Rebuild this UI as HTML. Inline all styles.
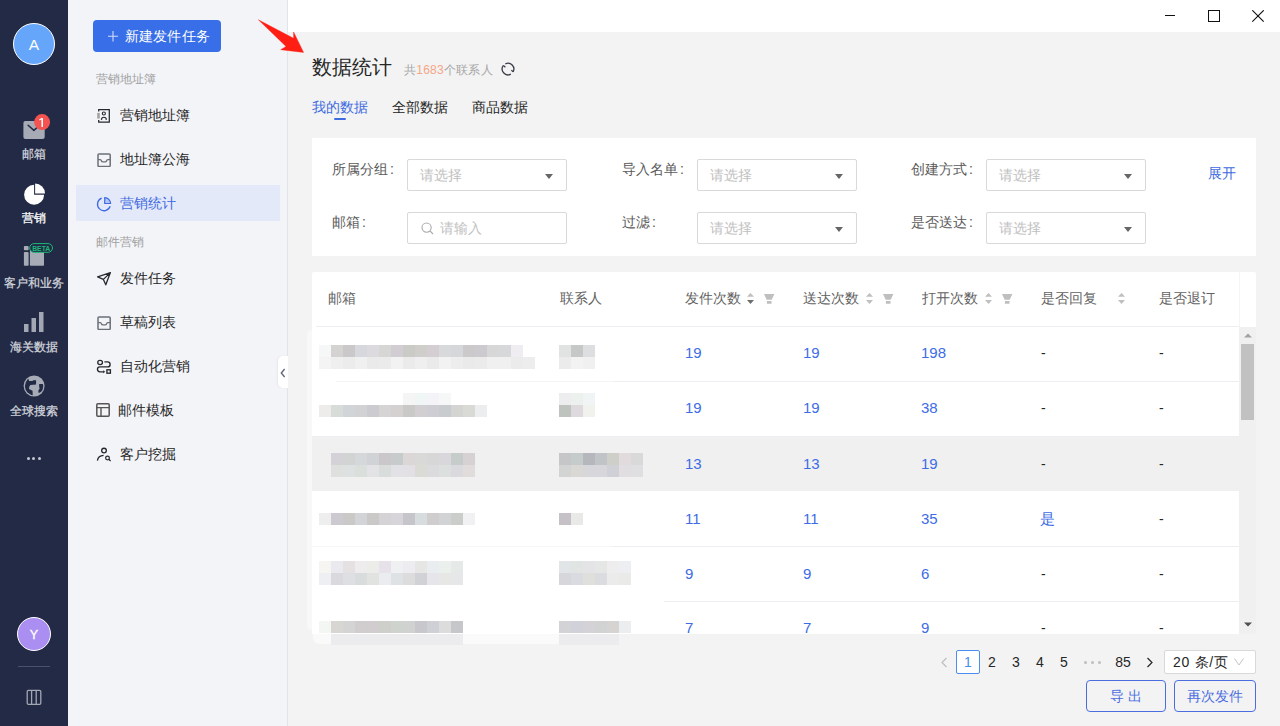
<!DOCTYPE html>
<html><head><meta charset="utf-8">
<style>
*{box-sizing:border-box;margin:0;padding:0}
html,body{width:1280px;height:726px;overflow:hidden;background:#f3f3f3;font-family:"Liberation Sans",sans-serif;color:#262626}
.a{position:absolute}
.t{position:absolute;white-space:nowrap;line-height:20px}
#nav{left:0;top:0;width:68px;height:726px;background:#222a45}
#side{left:68px;top:0;width:220px;height:726px;background:#f3f4f8;border-right:1px solid #e3e4e8}
#titlebar{left:288px;top:0;width:992px;height:32px;background:#fff}
.navtxt{position:absolute;left:0;width:68px;text-align:center;font-size:12px;line-height:16px;color:#d2d5dc;-webkit-text-stroke:0.25px currentColor}
.sec{font-size:12px;color:#a0a0a0}
.mi{font-size:14px;color:#262626}
.card{background:#fff}
.lbl{font-size:14px;color:#5a5a5a}
.co{margin-left:2px}
.sel{position:absolute;width:160px;height:32px;border:1px solid #d9d9d9;background:#fff;border-radius:2px}
.ph{position:absolute;left:12px;top:5px;font-size:14px;line-height:20px;color:#bfbfbf}
.caret{position:absolute;right:13px;top:14px;width:0;height:0;border-left:4px solid transparent;border-right:4px solid transparent;border-top:5px solid #666}
.th{font-size:14px;color:#626262}
.num{font-size:15px;color:#3d6ce6}
.dash{font-size:14px;color:#262626}
.blur{position:absolute}
</style></head><body>
<!-- left nav -->
<div id="nav" class="a">
  <div class="a" style="left:13px;top:23px;width:42px;height:42px;border-radius:50%;background:#66a6fa;border:1.5px solid #fff;"></div>
  <div class="t" style="left:13px;top:34.5px;width:42px;text-align:center;color:#fff;font-size:15.5px;">A</div>
  <!-- mail -->
  <svg class="a" style="left:22px;top:114px" width="32" height="28" viewBox="0 0 32 28">
    <rect x="1.4" y="6.9" width="21.3" height="18.2" rx="2" fill="#a7abb6"/>
    <path d="M6.1 11.3 L11.9 16.4 L17.5 11.3" stroke="#222a45" stroke-width="1.5" fill="none" stroke-linecap="round" stroke-linejoin="round"/>
    <circle cx="20.1" cy="8.1" r="8" fill="#f35452"/>
    <path d="M20.2 4.3 V13" stroke="#fff" stroke-width="1.5"/>
    <path d="M17.4 5.9 L20.3 4.2" stroke="#fff" stroke-width="1.2"/>
  </svg>
  <div class="navtxt" style="top:146px">邮箱</div>
  <!-- pie -->
  <svg class="a" style="left:20px;top:180px" width="28" height="28" viewBox="20 180 28 28">
    <path d="M34.1 184.7 A10 10 0 1 0 44.1 194.7 L34.1 194.7 Z" fill="#fff"/>
    <path d="M35.1 183.5 A9.9 9.9 0 0 1 45 193.4 L35.1 193.4 Z" fill="#fff"/>
  </svg>
  <div class="navtxt" style="top:210px;color:#fff">营销</div>
  <!-- customer -->
  <svg class="a" style="left:18px;top:238px" width="40" height="32" viewBox="18 238 40 32">
    <rect x="23.9" y="246.1" width="4.7" height="4.2" rx="0.8" fill="#a7abb6"/>
    <rect x="23.9" y="252.1" width="4.7" height="13.7" rx="0.8" fill="#a7abb6"/>
    <rect x="29.9" y="248" width="14.1" height="17.8" rx="0.8" fill="#a7abb6"/>
    <rect x="29.7" y="243.6" width="22.8" height="8.7" rx="4.35" fill="#222a45" stroke="#1db97a" stroke-width="1"/>
    <text x="41.2" y="250.8" font-size="7.2" font-weight="bold" fill="#1db97a" text-anchor="middle" font-family="Liberation Sans" textLength="18" lengthAdjust="spacingAndGlyphs">BETA</text>
  </svg>
  <div class="navtxt" style="top:275px">客户和业务</div>
  <!-- bars -->
  <svg class="a" style="left:24px;top:312px" width="20" height="20" viewBox="0 0 20 20">
    <rect x="0" y="12" width="4.5" height="8" fill="#a3a7b3"/>
    <rect x="7.5" y="6" width="4.5" height="14" fill="#a3a7b3"/>
    <rect x="15" y="0" width="4.5" height="20" fill="#a3a7b3"/>
  </svg>
  <div class="navtxt" style="top:339px">海关数据</div>
  <!-- globe -->
  <svg class="a" style="left:18px;top:370px" width="32" height="32" viewBox="18 370 32 32">
    <defs><clipPath id="gc"><circle cx="34.1" cy="386" r="9.2"/></clipPath></defs>
    <circle cx="34.1" cy="386" r="10.5" fill="#a7abb6"/>
    <g clip-path="url(#gc)" fill="#222a45">
      <path d="M28.58 370 L28.58 379.25 L29.02 381 L32.54 381 L33.2 380.36 L36.07 380.36 L36.07 384.54 L30.34 384.98 L29.24 386.75 L29.02 388.95 L32.54 390.71 L32.98 400 L18 400 L18 370 Z"/>
      <path d="M39.15 384.1 L46 384.1 L46 390 L38.7 392.9 L38.27 390.7 L39.6 388.5 L39.15 386.75 Z"/>
    </g>
  </svg>
  <div class="navtxt" style="top:403px">全球搜索</div>
  <!-- dots -->
  <div class="a" style="left:27px;top:457px;width:3px;height:3px;border-radius:50%;background:#c5c8d2"></div>
  <div class="a" style="left:32px;top:457px;width:3px;height:3px;border-radius:50%;background:#c5c8d2"></div>
  <div class="a" style="left:38px;top:457px;width:3px;height:3px;border-radius:50%;background:#c5c8d2"></div>
  <!-- Y avatar -->
  <div class="a" style="left:17px;top:617px;width:34px;height:34px;border-radius:50%;background:#ab8ef2;border:1px solid #fff;"></div>
  <div class="t" style="left:17px;top:624.5px;width:34px;text-align:center;color:#fff;font-size:12.5px;-webkit-text-stroke:0.3px #fff">Y</div>
  <div class="a" style="left:18px;top:666px;width:32px;height:1px;background:#4a5168"></div>
  <svg class="a" style="left:26px;top:689px" width="16" height="17" viewBox="26 689 16 17">
    <rect x="27.2" y="690.3" width="13.6" height="14" rx="1.3" fill="none" stroke="#a3a7b3" stroke-width="1.3"/>
    <line x1="31.6" y1="690.5" x2="31.6" y2="704" stroke="#a3a7b3" stroke-width="1.3"/>
    <line x1="36.2" y1="690.5" x2="36.2" y2="704" stroke="#a3a7b3" stroke-width="1.3"/>
  </svg>
</div>
<div id="side" class="a">
  <div class="a" style="left:25px;top:20px;width:128px;height:32px;border-radius:4px;background:#386ee7"></div>
  <svg class="a" style="left:40px;top:31px" width="10" height="11" viewBox="0 0 10 11"><path d="M5 0 V10.5 M0 5.2 H10" stroke="#d3ddfa" stroke-width="1.1"/></svg>
  <div class="t" style="left:56.5px;top:26px;font-size:14px;color:#fff;letter-spacing:0.3px">新建发件任务</div>
  <div class="t sec" style="left:28px;top:69px">营销地址簿</div>
  <!-- item 1 -->
  <svg class="a" style="left:26px;top:105px" width="20" height="22" viewBox="94 105 20 22">
    <path d="M98.7 111.6 V109.5 H109.3 V122.1 H98.7 V120.1" fill="none" stroke="#262830" stroke-width="1.25"/>
    <rect x="97.2" y="112.9" width="2.6" height="5.7" fill="#a3a3a3"/>
    <circle cx="103.85" cy="113.5" r="1.55" fill="none" stroke="#262830" stroke-width="1.1"/>
    <path d="M101.4 119.9 C101.6 116.4 106.2 116.4 106.4 119.9" fill="none" stroke="#262830" stroke-width="1.15"/>
  </svg>
  <div class="t mi" style="left:52px;top:105px">营销地址簿</div>
  <!-- item 2 -->
  <svg class="a" style="left:29px;top:153px" width="14" height="14" viewBox="0 0 14 14">
    <rect x="1" y="0.95" width="12.2" height="12.5" rx="1" fill="none" stroke="#6b6f78" stroke-width="1.5"/>
    <path d="M1 6.6 H3.2 Q4.1 6.6 4.4 7.7 Q4.7 8.8 5.8 8.8 H8.3 Q9.3 8.8 9.6 7.7 Q9.9 6.6 10.8 6.6 H13" fill="none" stroke="#6b6f78" stroke-width="1.35"/>
  </svg>
  <div class="t mi" style="left:52px;top:149px">地址簿公海</div>
  <!-- active item -->
  <div class="a" style="left:8px;top:185px;width:204px;height:36px;background:#e4e9fa"></div>
  <svg class="a" style="left:26px;top:192px" width="20" height="22" viewBox="94 192 20 22">
    <path d="M101.67 198.13 A6.5 6.5 0 1 0 110.15 206.32" fill="none" stroke="#3e6be0" stroke-width="1.3"/>
    <path d="M104.7 203.5 V197.6 A5.9 5.9 0 0 1 110.6 203.5 Z" fill="#b4c5f5" stroke="#3e6be0" stroke-width="1.2" stroke-linejoin="round"/>
  </svg>
  <div class="t mi" style="left:52px;top:193px;color:#3e6be0">营销统计</div>
  <div class="t sec" style="left:28px;top:232px">邮件营销</div>
  <!-- send -->
  <svg class="a" style="left:26px;top:268px" width="20" height="22" viewBox="94 268 20 22">
    <path d="M110.4 272.6 L97.6 276.9 L103.4 279.4 L105.8 284.8 Z M103.4 279.4 L110.4 272.6" fill="none" stroke="#262830" stroke-width="1.3" stroke-linejoin="round"/>
  </svg>
  <div class="t mi" style="left:52px;top:268px">发件任务</div>
  <!-- drafts -->
  <svg class="a" style="left:29px;top:316px" width="14" height="14" viewBox="0 0 14 14">
    <rect x="1" y="0.95" width="12.2" height="12.5" rx="1" fill="none" stroke="#6b6f78" stroke-width="1.5"/>
    <path d="M1 6.6 H3.2 Q4.1 6.6 4.4 7.7 Q4.7 8.8 5.8 8.8 H8.3 Q9.3 8.8 9.6 7.7 Q9.9 6.6 10.8 6.6 H13" fill="none" stroke="#6b6f78" stroke-width="1.35"/>
  </svg>
  <div class="t mi" style="left:52px;top:312px">草稿列表</div>
  <!-- automation -->
  <svg class="a" style="left:26px;top:356px" width="20" height="22" viewBox="94 356 20 22">
    <ellipse cx="100.1" cy="362.5" rx="2.35" ry="2.1" fill="none" stroke="#262830" stroke-width="1.3"/>
    <path d="M104.4 361.9 H107.6 A2.5 2.5 0 0 1 107.6 366.9 H99.9 A2.45 2.45 0 0 0 99.9 371.8 H103.6" fill="none" stroke="#262830" stroke-width="1.35"/>
    <path d="M103.2 370.3 L105.2 371.8 L103.2 373.3 Z" fill="#262830"/>
    <rect x="106.9" y="369.8" width="3.5" height="3.4" fill="none" stroke="#262830" stroke-width="1.35"/>
  </svg>
  <div class="t mi" style="left:52px;top:356px">自动化营销</div>
  <!-- template -->
  <svg class="a" style="left:28px;top:403px" width="14" height="14" viewBox="0 0 14 14">
    <rect x="0.8" y="0.8" width="12.4" height="12.4" rx="1" fill="none" stroke="#555" stroke-width="1.5"/>
    <path d="M0.8 4.6 H13.2 M5 4.6 V13.2" fill="none" stroke="#555" stroke-width="1.4"/>
  </svg>
  <div class="t mi" style="left:50px;top:400px">邮件模板</div>
  <!-- customer dig -->
  <svg class="a" style="left:26px;top:444px" width="20" height="22" viewBox="94 444 20 22">
    <circle cx="104" cy="450.6" r="2.35" fill="none" stroke="#262830" stroke-width="1.3"/>
    <path d="M97.4 460.6 C97.9 457.5 100.2 455.6 103.6 455.4" fill="none" stroke="#262830" stroke-width="1.3"/>
    <circle cx="107.5" cy="458" r="1.85" fill="none" stroke="#262830" stroke-width="1.25"/>
    <path d="M108.8 459.3 L110.6 460.9" stroke="#262830" stroke-width="1.3"/>
  </svg>
  <div class="t mi" style="left:52px;top:444px">客户挖掘</div>
  <!-- collapse handle -->
  <div class="a" style="left:210px;top:356px;width:10px;height:32px;background:#fff;border-radius:5px 0 0 5px;box-shadow:-1px 0 2px rgba(0,0,0,0.05)"></div>
  <svg class="a" style="left:212px;top:367.5px" width="6" height="10" viewBox="0 0 6 10"><path d="M4.6 1 L1.3 5 L4.6 9" fill="none" stroke="#5f6577" stroke-width="1.35"/></svg>
</div>
<div id="titlebar" class="a">
  <div class="a" style="left:877px;top:15px;width:10px;height:1px;background:#111"></div>
  <div class="a" style="left:920px;top:10px;width:12px;height:12px;border:1px solid #111"></div>
  <svg class="a" style="left:964px;top:10px" width="13" height="13" viewBox="0 0 13 13"><path d="M0.3 0.3 L11.7 11.7 M11.7 0.3 L0.3 11.7" stroke="#111" stroke-width="1.15"/></svg>
</div>
<!-- arrow -->
<svg class="a" style="left:0;top:0" width="320" height="60" viewBox="0 0 320 60">
  <path d="M258.4 19.8 L293.6 38.3 L293.6 32.0 L303.6 52.4 L280.7 49.7 L286.0 46.4 Z" fill="#ff1e14" stroke="#ff1e14" stroke-width="0.4" stroke-linejoin="round"/>
</svg>
<!-- title -->
<div class="t" style="left:312px;top:54px;font-size:20px;line-height:26px;color:#262626">数据统计</div>
<div class="t" style="left:404px;top:60px;font-size:12px;color:#a6a6a6;letter-spacing:0.25px">共<span style="color:#f5a688">1683</span>个联系人</div>
<svg class="a" style="left:500px;top:61px" width="16" height="16" viewBox="0 0 16 16">
  <path d="M5.37 2.83 A5.8 5.8 0 0 1 13.02 10.9 M10.81 13.07 A5.8 5.8 0 0 1 3.43 4.43" fill="none" stroke="#3b3e4a" stroke-width="1.3"/>
  <path d="M13.02 10.9 L11.4 9.1 M3.43 4.43 L5.4 6.3" fill="none" stroke="#3b3e4a" stroke-width="1.3"/>
</svg>
<!-- tabs -->
<div class="t" style="left:312px;top:97px;font-size:14px;color:#3e6be0">我的数据</div>
<div class="a" style="left:334px;top:118px;width:12px;height:2px;background:#3e6be0;border-radius:1px"></div>
<div class="t" style="left:392px;top:97px;font-size:14px;color:#262626">全部数据</div>
<div class="t" style="left:472px;top:97px;font-size:14px;color:#262626">商品数据</div>
<div class="a" style="left:307px;top:330px;width:6px;height:300px;background:#f8f8f8;border-radius:4px 0 0 4px"></div>
<div class="a" style="left:313px;top:633px;width:305px;height:11px;background:#fafafa;border-radius:0 0 10px 6px"></div>
<div class="a" style="left:331px;top:633px;width:132px;height:12px;background:rgb(236,236,238)"></div>
<div class="a" style="left:559px;top:633px;width:60px;height:12px;background:rgb(236,236,238)"></div>
<!-- filter card -->
<div class="a card" style="left:312px;top:138px;width:944px;height:118px"></div>
<div class="t lbl" style="left:332px;top:159px">所属分组<span class="co">:</span></div>
<div class="sel" style="left:407px;top:159px"><span class="ph">请选择</span><i class="caret"></i></div>
<div class="t lbl" style="left:622px;top:159px">导入名单<span class="co">:</span></div>
<div class="sel" style="left:697px;top:159px"><span class="ph">请选择</span><i class="caret"></i></div>
<div class="t lbl" style="left:911px;top:159px">创建方式<span class="co">:</span></div>
<div class="sel" style="left:986px;top:159px"><span class="ph">请选择</span><i class="caret"></i></div>
<div class="t" style="left:1208px;top:163px;font-size:14px;color:#3e6be0">展开</div>
<div class="t lbl" style="left:332px;top:212px">邮箱<span class="co">:</span></div>
<div class="sel" style="left:407px;top:212px">
  <svg class="a" style="left:13px;top:9px" width="13" height="13" viewBox="0 0 13 13"><circle cx="5.6" cy="5.6" r="4.6" fill="none" stroke="#aaa" stroke-width="1.1"/><path d="M9 9 L12 12" stroke="#aaa" stroke-width="1.1"/></svg>
  <span class="ph" style="left:32px">请输入</span>
</div>
<div class="t lbl" style="left:622px;top:212px">过滤<span class="co">:</span></div>
<div class="sel" style="left:697px;top:212px"><span class="ph">请选择</span><i class="caret"></i></div>
<div class="t lbl" style="left:911px;top:212px">是否送达<span class="co">:</span></div>
<div class="sel" style="left:986px;top:212px"><span class="ph">请选择</span><i class="caret"></i></div>

<div class="a" style="left:312px;top:272px;width:944px;height:362px;background:#fff;border-radius:2px 2px 0 0"></div>
<div class="a" style="left:316px;top:326px;width:923px;height:1px;background:#eceef2"></div>
<div class="a" style="left:1239px;top:272px;width:1px;height:55px;background:#f4f5f7"></div>
<div class="t th" style="left:328px;top:288px">邮箱</div>
<div class="t th" style="left:560px;top:288px">联系人</div>
<div class="t th" style="left:685px;top:288px">发件次数</div>
<div class="t th" style="left:803px;top:288px">送达次数</div>
<div class="t th" style="left:922px;top:288px">打开次数</div>
<div class="t th" style="left:1041px;top:288px">是否回复</div>
<div class="t th" style="left:1159px;top:288px">是否退订</div>
<div class="a" style="left:312px;top:436px;width:927px;height:55px;background:#f0f0f0"></div>
<div class="a" style="left:614px;top:381px;width:625px;height:1px;background:#eceef2"></div><div class="a" style="left:336px;top:381px;width:278px;height:1px;background:#f4f4f6"></div>
<div class="a" style="left:312px;top:436px;width:927px;height:1px;background:#eceef2"></div>
<div class="a" style="left:612px;top:546px;width:627px;height:1px;background:#eceef2"></div><div class="a" style="left:312px;top:546px;width:300px;height:1px;background:#f6f6f8"></div>
<div class="a" style="left:664px;top:601px;width:575px;height:1px;background:#eceef2"></div>
<div class="t num" style="left:685px;top:343px">19</div>
<div class="t num" style="left:803px;top:343px">19</div>
<div class="t num" style="left:921px;top:343px">198</div>
<div class="t dash" style="left:1041px;top:343px">-</div>
<div class="t dash" style="left:1159px;top:343px">-</div>
<div class="t num" style="left:685px;top:398px">19</div>
<div class="t num" style="left:803px;top:398px">19</div>
<div class="t num" style="left:921px;top:398px">38</div>
<div class="t dash" style="left:1041px;top:398px">-</div>
<div class="t dash" style="left:1159px;top:398px">-</div>
<div class="t num" style="left:685px;top:453.5px">13</div>
<div class="t num" style="left:803px;top:453.5px">13</div>
<div class="t num" style="left:921px;top:453.5px">19</div>
<div class="t dash" style="left:1041px;top:453.5px">-</div>
<div class="t dash" style="left:1159px;top:453.5px">-</div>
<div class="t num" style="left:685px;top:508.5px">11</div>
<div class="t num" style="left:803px;top:508.5px">11</div>
<div class="t num" style="left:921px;top:508.5px">35</div>
<div class="t num" style="left:1040px;top:508.5px">是</div>
<div class="t dash" style="left:1159px;top:508.5px">-</div>
<div class="t num" style="left:685px;top:563.5px">9</div>
<div class="t num" style="left:803px;top:563.5px">9</div>
<div class="t num" style="left:921px;top:563.5px">6</div>
<div class="t dash" style="left:1041px;top:563.5px">-</div>
<div class="t dash" style="left:1159px;top:563.5px">-</div>
<div class="t num" style="left:685px;top:618px">7</div>
<div class="t num" style="left:803px;top:618px">7</div>
<div class="t num" style="left:921px;top:618px">9</div>
<div class="t dash" style="left:1041px;top:618px">-</div>
<div class="t dash" style="left:1159px;top:618px">-</div>
<div class="a" style="left:312px;top:627px;width:927px;height:7px;overflow:hidden"></div>
<div class="a" style="left:319px;top:345px;width:12px;height:12px;opacity:0.5;background:rgb(238,241,240)"></div>
<div class="a" style="left:331px;top:345px;width:12px;height:12px;background:rgb(212,211,210)"></div><div class="a" style="left:343px;top:345px;width:12px;height:12px;background:rgb(203,200,202)"></div><div class="a" style="left:355px;top:345px;width:12px;height:12px;background:rgb(215,215,222)"></div><div class="a" style="left:367px;top:345px;width:12px;height:12px;background:rgb(220,218,222)"></div><div class="a" style="left:379px;top:345px;width:12px;height:12px;background:rgb(214,215,212)"></div><div class="a" style="left:391px;top:345px;width:12px;height:12px;background:rgb(209,205,211)"></div><div class="a" style="left:403px;top:345px;width:12px;height:12px;background:rgb(202,203,199)"></div><div class="a" style="left:415px;top:345px;width:12px;height:12px;background:rgb(208,206,203)"></div><div class="a" style="left:427px;top:345px;width:12px;height:12px;background:rgb(212,206,211)"></div><div class="a" style="left:439px;top:345px;width:12px;height:12px;background:rgb(216,217,219)"></div><div class="a" style="left:451px;top:345px;width:12px;height:12px;background:rgb(213,215,218)"></div><div class="a" style="left:463px;top:345px;width:12px;height:12px;background:rgb(203,201,202)"></div><div class="a" style="left:475px;top:345px;width:12px;height:12px;background:rgb(204,202,206)"></div><div class="a" style="left:487px;top:345px;width:12px;height:12px;background:rgb(216,215,215)"></div><div class="a" style="left:499px;top:345px;width:12px;height:12px;background:rgb(214,216,217)"></div>
<div class="a" style="left:511px;top:345px;width:12px;height:12px;background:rgb(239,237,242)"></div>
<div class="a" style="left:319px;top:357px;width:12px;height:12px;background:rgb(244,244,245)"></div><div class="a" style="left:331px;top:357px;width:12px;height:12px;background:rgb(239,239,240)"></div><div class="a" style="left:343px;top:357px;width:12px;height:12px;background:rgb(236,236,237)"></div><div class="a" style="left:355px;top:357px;width:12px;height:12px;background:rgb(240,240,241)"></div><div class="a" style="left:367px;top:357px;width:12px;height:12px;background:rgb(234,234,235)"></div><div class="a" style="left:379px;top:357px;width:12px;height:12px;background:rgb(235,235,236)"></div><div class="a" style="left:391px;top:357px;width:12px;height:12px;background:rgb(242,242,243)"></div><div class="a" style="left:403px;top:357px;width:12px;height:12px;background:rgb(235,235,236)"></div><div class="a" style="left:415px;top:357px;width:12px;height:12px;background:rgb(239,239,240)"></div><div class="a" style="left:427px;top:357px;width:12px;height:12px;background:rgb(234,234,235)"></div><div class="a" style="left:439px;top:357px;width:12px;height:12px;background:rgb(242,242,243)"></div><div class="a" style="left:451px;top:357px;width:12px;height:12px;background:rgb(237,237,238)"></div><div class="a" style="left:463px;top:357px;width:12px;height:12px;background:rgb(234,234,235)"></div><div class="a" style="left:475px;top:357px;width:12px;height:12px;background:rgb(235,235,236)"></div><div class="a" style="left:487px;top:357px;width:12px;height:12px;background:rgb(240,240,241)"></div><div class="a" style="left:499px;top:357px;width:12px;height:12px;background:rgb(240,240,241)"></div><div class="a" style="left:511px;top:357px;width:12px;height:12px;background:rgb(235,235,236)"></div><div class="a" style="left:523px;top:357px;width:12px;height:12px;background:rgb(237,237,238)"></div>
<div class="a" style="left:559px;top:345px;width:12px;height:12px;background:rgb(225,227,226)"></div><div class="a" style="left:571px;top:345px;width:12px;height:12px;background:rgb(198,200,199)"></div><div class="a" style="left:583px;top:345px;width:12px;height:12px;background:rgb(221,222,224)"></div>
<div class="a" style="left:559px;top:357px;width:12px;height:12px;background:rgb(235,235,236)"></div><div class="a" style="left:571px;top:357px;width:12px;height:12px;background:rgb(242,242,243)"></div><div class="a" style="left:583px;top:357px;width:12px;height:12px;background:rgb(240,240,241)"></div>
<div class="a" style="left:403px;top:393px;width:12px;height:12px;background:rgb(244,245,244)"></div><div class="a" style="left:415px;top:393px;width:12px;height:12px;background:rgb(240,245,246)"></div><div class="a" style="left:427px;top:393px;width:12px;height:12px;background:rgb(244,243,247)"></div><div class="a" style="left:439px;top:393px;width:12px;height:12px;background:rgb(246,247,247)"></div>
<div class="a" style="left:319px;top:405px;width:12px;height:12px;background:rgb(238,236,234)"></div>
<div class="a" style="left:331px;top:405px;width:12px;height:12px;background:rgb(215,220,216)"></div><div class="a" style="left:343px;top:405px;width:12px;height:12px;background:rgb(210,213,216)"></div><div class="a" style="left:355px;top:405px;width:12px;height:12px;background:rgb(210,210,212)"></div><div class="a" style="left:367px;top:405px;width:12px;height:12px;background:rgb(204,203,208)"></div><div class="a" style="left:379px;top:405px;width:12px;height:12px;background:rgb(214,212,213)"></div><div class="a" style="left:391px;top:405px;width:12px;height:12px;background:rgb(212,209,208)"></div><div class="a" style="left:403px;top:405px;width:12px;height:12px;background:rgb(201,202,200)"></div><div class="a" style="left:415px;top:405px;width:12px;height:12px;background:rgb(210,207,211)"></div><div class="a" style="left:427px;top:405px;width:12px;height:12px;background:rgb(206,205,211)"></div><div class="a" style="left:439px;top:405px;width:12px;height:12px;background:rgb(200,204,206)"></div><div class="a" style="left:451px;top:405px;width:12px;height:12px;background:rgb(212,213,211)"></div><div class="a" style="left:463px;top:405px;width:12px;height:12px;background:rgb(217,217,214)"></div>
<div class="a" style="left:475px;top:405px;width:12px;height:12px;background:rgb(235,237,239)"></div>
<div class="a" style="left:559px;top:393px;width:12px;height:12px;background:rgb(237,236,238)"></div><div class="a" style="left:571px;top:393px;width:12px;height:12px;background:rgb(236,241,237)"></div><div class="a" style="left:583px;top:393px;width:12px;height:12px;background:rgb(240,244,244)"></div>
<div class="a" style="left:559px;top:405px;width:12px;height:12px;background:rgb(191,195,192)"></div><div class="a" style="left:571px;top:405px;width:12px;height:12px;background:rgb(221,217,221)"></div><div class="a" style="left:583px;top:405px;width:12px;height:12px;background:rgb(241,241,237)"></div>
<div class="a" style="left:331px;top:453px;width:12px;height:12px;background:rgb(212,209,215)"></div><div class="a" style="left:343px;top:453px;width:12px;height:12px;background:rgb(210,212,211)"></div><div class="a" style="left:355px;top:453px;width:12px;height:12px;background:rgb(213,216,218)"></div><div class="a" style="left:367px;top:453px;width:12px;height:12px;background:rgb(209,210,213)"></div><div class="a" style="left:379px;top:453px;width:12px;height:12px;background:rgb(201,199,202)"></div><div class="a" style="left:391px;top:453px;width:12px;height:12px;background:rgb(200,203,204)"></div><div class="a" style="left:403px;top:453px;width:12px;height:12px;background:rgb(219,215,215)"></div><div class="a" style="left:415px;top:453px;width:12px;height:12px;background:rgb(217,217,216)"></div><div class="a" style="left:427px;top:453px;width:12px;height:12px;background:rgb(216,215,216)"></div><div class="a" style="left:439px;top:453px;width:12px;height:12px;background:rgb(217,215,219)"></div><div class="a" style="left:451px;top:453px;width:12px;height:12px;background:rgb(198,204,202)"></div><div class="a" style="left:463px;top:453px;width:12px;height:12px;background:rgb(214,210,211)"></div>
<div class="a" style="left:331px;top:465px;width:12px;height:12px;background:rgb(222,224,221)"></div><div class="a" style="left:343px;top:465px;width:12px;height:12px;background:rgb(222,225,226)"></div><div class="a" style="left:355px;top:465px;width:12px;height:12px;background:rgb(219,223,219)"></div><div class="a" style="left:367px;top:465px;width:12px;height:12px;background:rgb(227,227,230)"></div><div class="a" style="left:379px;top:465px;width:12px;height:12px;background:rgb(216,220,218)"></div><div class="a" style="left:391px;top:465px;width:12px;height:12px;background:rgb(226,225,229)"></div><div class="a" style="left:403px;top:465px;width:12px;height:12px;background:rgb(226,224,228)"></div><div class="a" style="left:415px;top:465px;width:12px;height:12px;background:rgb(219,219,214)"></div><div class="a" style="left:427px;top:465px;width:12px;height:12px;background:rgb(219,218,221)"></div><div class="a" style="left:439px;top:465px;width:12px;height:12px;background:rgb(219,223,221)"></div><div class="a" style="left:451px;top:465px;width:12px;height:12px;background:rgb(218,218,222)"></div><div class="a" style="left:463px;top:465px;width:12px;height:12px;background:rgb(225,220,220)"></div>
<div class="a" style="left:559px;top:453px;width:12px;height:12px;background:rgb(196,198,200)"></div><div class="a" style="left:571px;top:453px;width:12px;height:12px;background:rgb(197,203,202)"></div><div class="a" style="left:583px;top:453px;width:12px;height:12px;background:rgb(182,183,188)"></div><div class="a" style="left:595px;top:453px;width:12px;height:12px;background:rgb(193,196,199)"></div><div class="a" style="left:607px;top:453px;width:12px;height:12px;background:rgb(207,207,202)"></div><div class="a" style="left:619px;top:453px;width:12px;height:12px;background:rgb(225,219,222)"></div><div class="a" style="left:631px;top:453px;width:12px;height:12px;background:rgb(217,217,218)"></div>
<div class="a" style="left:559px;top:465px;width:12px;height:12px;background:rgb(209,212,210)"></div><div class="a" style="left:571px;top:465px;width:12px;height:12px;background:rgb(217,216,213)"></div><div class="a" style="left:583px;top:465px;width:12px;height:12px;background:rgb(215,215,219)"></div><div class="a" style="left:595px;top:465px;width:12px;height:12px;background:rgb(215,214,219)"></div><div class="a" style="left:607px;top:465px;width:12px;height:12px;background:rgb(207,209,214)"></div><div class="a" style="left:619px;top:465px;width:12px;height:12px;background:rgb(224,222,224)"></div><div class="a" style="left:631px;top:465px;width:12px;height:12px;background:rgb(223,223,225)"></div>
<div class="a" style="left:319px;top:513px;width:12px;height:12px;background:rgb(237,238,237)"></div>
<div class="a" style="left:331px;top:513px;width:12px;height:12px;background:rgb(205,201,208)"></div><div class="a" style="left:343px;top:513px;width:12px;height:12px;background:rgb(203,200,200)"></div><div class="a" style="left:355px;top:513px;width:12px;height:12px;background:rgb(211,212,215)"></div><div class="a" style="left:367px;top:513px;width:12px;height:12px;background:rgb(202,201,199)"></div><div class="a" style="left:379px;top:513px;width:12px;height:12px;background:rgb(213,211,214)"></div><div class="a" style="left:391px;top:513px;width:12px;height:12px;background:rgb(215,213,218)"></div><div class="a" style="left:403px;top:513px;width:12px;height:12px;background:rgb(198,198,202)"></div><div class="a" style="left:415px;top:513px;width:12px;height:12px;background:rgb(215,221,222)"></div><div class="a" style="left:427px;top:513px;width:12px;height:12px;background:rgb(207,205,205)"></div><div class="a" style="left:439px;top:513px;width:12px;height:12px;background:rgb(209,211,212)"></div><div class="a" style="left:451px;top:513px;width:12px;height:12px;background:rgb(203,205,202)"></div>
<div class="a" style="left:463px;top:513px;width:12px;height:12px;background:rgb(241,240,242)"></div>
<div class="a" style="left:559px;top:513px;width:12px;height:12px;background:rgb(198,193,199)"></div><div class="a" style="left:571px;top:513px;width:12px;height:12px;background:rgb(233,233,231)"></div>
<div class="a" style="left:319px;top:561px;width:12px;height:12px;background:rgb(247,245,242)"></div>
<div class="a" style="left:331px;top:561px;width:12px;height:12px;background:rgb(233,233,239)"></div><div class="a" style="left:343px;top:561px;width:12px;height:12px;background:rgb(229,225,227)"></div><div class="a" style="left:355px;top:561px;width:12px;height:12px;background:rgb(238,236,236)"></div><div class="a" style="left:367px;top:561px;width:12px;height:12px;background:rgb(236,236,232)"></div><div class="a" style="left:379px;top:561px;width:12px;height:12px;background:rgb(231,225,233)"></div><div class="a" style="left:391px;top:561px;width:12px;height:12px;background:rgb(238,240,241)"></div><div class="a" style="left:403px;top:561px;width:12px;height:12px;background:rgb(237,237,241)"></div><div class="a" style="left:415px;top:561px;width:12px;height:12px;background:rgb(230,231,228)"></div><div class="a" style="left:427px;top:561px;width:12px;height:12px;background:rgb(233,237,239)"></div><div class="a" style="left:439px;top:561px;width:12px;height:12px;background:rgb(235,240,236)"></div><div class="a" style="left:451px;top:561px;width:12px;height:12px;background:rgb(229,233,232)"></div>
<div class="a" style="left:319px;top:573px;width:12px;height:12px;background:rgb(238,239,242)"></div>
<div class="a" style="left:331px;top:573px;width:12px;height:12px;background:rgb(217,217,222)"></div><div class="a" style="left:343px;top:573px;width:12px;height:12px;background:rgb(221,223,226)"></div><div class="a" style="left:355px;top:573px;width:12px;height:12px;background:rgb(217,220,221)"></div><div class="a" style="left:367px;top:573px;width:12px;height:12px;background:rgb(224,227,224)"></div><div class="a" style="left:379px;top:573px;width:12px;height:12px;background:rgb(234,236,239)"></div><div class="a" style="left:391px;top:573px;width:12px;height:12px;background:rgb(222,226,228)"></div><div class="a" style="left:403px;top:573px;width:12px;height:12px;background:rgb(220,220,221)"></div><div class="a" style="left:415px;top:573px;width:12px;height:12px;background:rgb(208,210,213)"></div><div class="a" style="left:427px;top:573px;width:12px;height:12px;background:rgb(230,229,233)"></div><div class="a" style="left:439px;top:573px;width:12px;height:12px;background:rgb(231,232,230)"></div><div class="a" style="left:451px;top:573px;width:12px;height:12px;background:rgb(230,231,233)"></div>
<div class="a" style="left:559px;top:561px;width:12px;height:12px;background:rgb(226,229,231)"></div><div class="a" style="left:571px;top:561px;width:12px;height:12px;background:rgb(224,229,228)"></div><div class="a" style="left:583px;top:561px;width:12px;height:12px;background:rgb(228,228,230)"></div><div class="a" style="left:595px;top:561px;width:12px;height:12px;background:rgb(229,231,230)"></div><div class="a" style="left:607px;top:561px;width:12px;height:12px;background:rgb(236,237,236)"></div><div class="a" style="left:619px;top:561px;width:12px;height:12px;background:rgb(237,238,242)"></div>
<div class="a" style="left:559px;top:573px;width:12px;height:12px;background:rgb(214,214,219)"></div><div class="a" style="left:571px;top:573px;width:12px;height:12px;background:rgb(218,219,225)"></div><div class="a" style="left:583px;top:573px;width:12px;height:12px;background:rgb(223,223,220)"></div><div class="a" style="left:595px;top:573px;width:12px;height:12px;background:rgb(218,220,223)"></div><div class="a" style="left:607px;top:573px;width:12px;height:12px;background:rgb(236,235,235)"></div><div class="a" style="left:619px;top:573px;width:12px;height:12px;background:rgb(234,235,232)"></div>
<div class="a" style="left:319px;top:621px;width:12px;height:12px;background:rgb(244,246,243)"></div>
<div class="a" style="left:331px;top:621px;width:12px;height:12px;background:rgb(215,214,210)"></div><div class="a" style="left:343px;top:621px;width:12px;height:12px;background:rgb(212,212,213)"></div><div class="a" style="left:355px;top:621px;width:12px;height:12px;background:rgb(209,205,207)"></div><div class="a" style="left:367px;top:621px;width:12px;height:12px;background:rgb(209,205,206)"></div><div class="a" style="left:379px;top:621px;width:12px;height:12px;background:rgb(206,207,203)"></div><div class="a" style="left:391px;top:621px;width:12px;height:12px;background:rgb(206,211,206)"></div><div class="a" style="left:403px;top:621px;width:12px;height:12px;background:rgb(208,210,209)"></div><div class="a" style="left:415px;top:621px;width:12px;height:12px;background:rgb(199,199,204)"></div><div class="a" style="left:427px;top:621px;width:12px;height:12px;background:rgb(206,208,214)"></div><div class="a" style="left:439px;top:621px;width:12px;height:12px;background:rgb(220,220,221)"></div><div class="a" style="left:451px;top:621px;width:12px;height:12px;background:rgb(197,199,203)"></div>
<div class="a" style="left:559px;top:621px;width:12px;height:12px;background:rgb(210,210,215)"></div><div class="a" style="left:571px;top:621px;width:12px;height:12px;background:rgb(209,210,217)"></div><div class="a" style="left:583px;top:621px;width:12px;height:12px;background:rgb(212,210,215)"></div><div class="a" style="left:595px;top:621px;width:12px;height:12px;background:rgb(209,211,211)"></div><div class="a" style="left:607px;top:621px;width:12px;height:12px;background:rgb(214,212,211)"></div><div class="a" style="left:619px;top:621px;width:12px;height:12px;background:rgb(236,237,238)"></div>
<div class="a" style="left:1239px;top:327px;width:17px;height:307px;background:#f0f0f0"></div>
<div class="a" style="left:1241px;top:344px;width:13px;height:76px;background:#c1c1c1"></div>
<svg class="a" style="left:1244px;top:333px" width="8" height="5" viewBox="0 0 8 5"><path d="M0 4.5 L4 0.5 L8 4.5 Z" fill="#a3a3a3"/></svg>
<svg class="a" style="left:1244px;top:622px" width="8" height="5" viewBox="0 0 8 5"><path d="M0 0.5 L4 4.5 L8 0.5 Z" fill="#505050"/></svg>
<svg class="a" style="left:940px;top:657px" width="8" height="11" viewBox="0 0 8 11"><path d="M6.5 1 L2 5.5 L6.5 10" fill="none" stroke="#bfbfbf" stroke-width="1.2"/></svg>
<div class="a" style="left:956px;top:650px;width:24px;height:24px;border:1px solid #4a8ef0;border-radius:2px;background:#fff"></div>
<div class="t" style="left:956px;top:652px;width:24px;text-align:center;font-size:14px;color:#4a8ef0">1</div>
<div class="t" style="left:977px;top:652px;width:30px;text-align:center;font-size:14px;color:#262626">2</div>
<div class="t" style="left:1001px;top:652px;width:30px;text-align:center;font-size:14px;color:#262626">3</div>
<div class="t" style="left:1025px;top:652px;width:30px;text-align:center;font-size:14px;color:#262626">4</div>
<div class="t" style="left:1049px;top:652px;width:30px;text-align:center;font-size:14px;color:#262626">5</div>
<div class="t" style="left:1108px;top:652px;width:30px;text-align:center;font-size:14px;color:#262626">85</div>
<div class="a" style="left:1084px;top:661px;width:3px;height:3px;border-radius:50%;background:#bfbfbf"></div>
<div class="a" style="left:1091px;top:661px;width:3px;height:3px;border-radius:50%;background:#bfbfbf"></div>
<div class="a" style="left:1098px;top:661px;width:3px;height:3px;border-radius:50%;background:#bfbfbf"></div>
<svg class="a" style="left:1146px;top:657px" width="8" height="11" viewBox="0 0 8 11"><path d="M1.5 1 L6 5.5 L1.5 10" fill="none" stroke="#262626" stroke-width="1.2"/></svg>
<div class="a" style="left:1164px;top:650px;width:92px;height:24px;border:1px solid #d9d9d9;border-radius:2px;background:#fff"></div>
<div class="t" style="left:1173px;top:652px;font-size:14px;color:#262626;letter-spacing:0.7px">20 条/页</div>
<svg class="a" style="left:1234px;top:658px" width="11" height="8" viewBox="0 0 11 8"><path d="M0.5 0.5 L5 7 L9.5 0.5" fill="none" stroke="#c4c4c4" stroke-width="1"/></svg>
<div class="a" style="left:1086px;top:680px;width:80px;height:32px;border:1px solid #4a6ee0;border-radius:4px;background:#fff0"></div>
<div class="t" style="left:1086px;top:686px;width:80px;text-align:center;font-size:14px;color:#4a6ee0;letter-spacing:4px;text-indent:4px">导出</div>
<div class="a" style="left:1174px;top:680px;width:82px;height:32px;border:1px solid #4a6ee0;border-radius:4px"></div>
<div class="t" style="left:1174px;top:686px;width:82px;text-align:center;font-size:14px;color:#4a6ee0">再次发件</div>
<svg class="a" style="left:746.5px;top:293px" width="7" height="11" viewBox="0 0 7 11"><path d="M0 3.8 L3.5 0 L7 3.8 Z" fill="#bfbfbf"/><path d="M0 7 L7 7 L3.5 11 Z" fill="#6e6e6e"/></svg>
<svg class="a" style="left:865.5px;top:293px" width="7" height="11" viewBox="0 0 7 11"><path d="M0 3.8 L3.5 0 L7 3.8 Z" fill="#bfbfbf"/><path d="M0 7 L7 7 L3.5 11 Z" fill="#bfbfbf"/></svg>
<svg class="a" style="left:984.5px;top:293px" width="7" height="11" viewBox="0 0 7 11"><path d="M0 3.8 L3.5 0 L7 3.8 Z" fill="#bfbfbf"/><path d="M0 7 L7 7 L3.5 11 Z" fill="#bfbfbf"/></svg>
<svg class="a" style="left:1118.4px;top:293px" width="7" height="11" viewBox="0 0 7 11"><path d="M0 3.8 L3.5 0 L7 3.8 Z" fill="#bfbfbf"/><path d="M0 7 L7 7 L3.5 11 Z" fill="#bfbfbf"/></svg>
<svg class="a" style="left:763.7px;top:294px" width="11" height="10" viewBox="0 0 11 10"><path d="M0 0 H10.4 L7.7 5.8 H2.7 Z M2.9 7 H7.5 V9.8 H2.9 Z" fill="#bfbfbf"/></svg>
<svg class="a" style="left:882.7px;top:294px" width="11" height="10" viewBox="0 0 11 10"><path d="M0 0 H10.4 L7.7 5.8 H2.7 Z M2.9 7 H7.5 V9.8 H2.9 Z" fill="#bfbfbf"/></svg>
<svg class="a" style="left:1001.5px;top:294px" width="11" height="10" viewBox="0 0 11 10"><path d="M0 0 H10.4 L7.7 5.8 H2.7 Z M2.9 7 H7.5 V9.8 H2.9 Z" fill="#bfbfbf"/></svg>
</body></html>
